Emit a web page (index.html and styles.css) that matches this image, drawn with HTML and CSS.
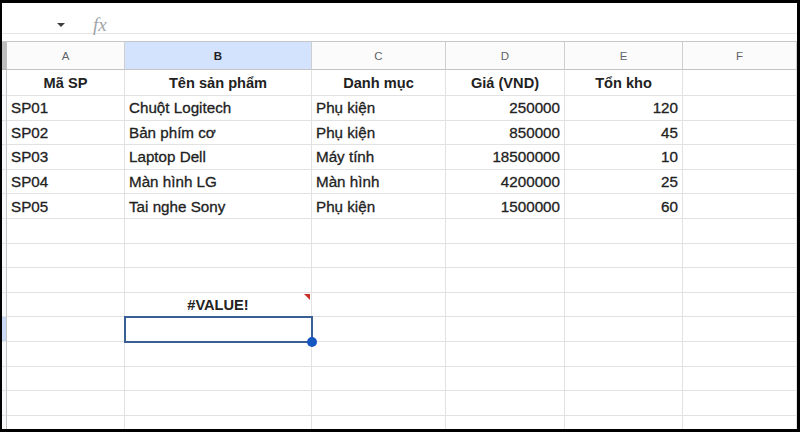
FILE: index.html
```html
<!DOCTYPE html>
<html>
<head>
<meta charset="utf-8">
<link rel="stylesheet" href="styles.css">
</head>
<body>
<div class="frame">
  <div class="toolbar">
    <div class="fbar">
      <span class="caret"></span>
      <span class="fx">fx</span>
    </div>
  </div>
  <div class="grid">
    <div class="corner"></div>
    <div class="ch">A</div>
    <div class="ch sel">B</div>
    <div class="ch">C</div>
    <div class="ch">D</div>
    <div class="ch">E</div>
    <div class="ch">F</div>

    <div class="rh"></div>
    <div class="c b ctr">Mã SP</div>
    <div class="c b ctr">Tên sản phẩm</div>
    <div class="c b ctr">Danh mục</div>
    <div class="c b ctr">Giá (VND)</div>
    <div class="c b ctr">Tổn kho</div>
    <div class="c"></div>

    <div class="rh"></div>
    <div class="c">SP01</div>
    <div class="c">Chuột Logitech</div>
    <div class="c">Phụ kiện</div>
    <div class="c num">250000</div>
    <div class="c num">120</div>
    <div class="c"></div>

    <div class="rh"></div>
    <div class="c">SP02</div>
    <div class="c">Bản phím cơ</div>
    <div class="c">Phụ kiện</div>
    <div class="c num">850000</div>
    <div class="c num">45</div>
    <div class="c"></div>

    <div class="rh"></div>
    <div class="c">SP03</div>
    <div class="c">Laptop Dell</div>
    <div class="c">Máy tính</div>
    <div class="c num">18500000</div>
    <div class="c num">10</div>
    <div class="c"></div>

    <div class="rh"></div>
    <div class="c">SP04</div>
    <div class="c">Màn hình LG</div>
    <div class="c">Màn hình</div>
    <div class="c num">4200000</div>
    <div class="c num">25</div>
    <div class="c"></div>

    <div class="rh"></div>
    <div class="c">SP05</div>
    <div class="c">Tai nghe Sony</div>
    <div class="c">Phụ kiện</div>
    <div class="c num">1500000</div>
    <div class="c num">60</div>
    <div class="c"></div>

    <div class="rh"></div><div class="c"></div><div class="c"></div><div class="c"></div><div class="c"></div><div class="c"></div><div class="c"></div>
    <div class="rh"></div><div class="c"></div><div class="c"></div><div class="c"></div><div class="c"></div><div class="c"></div><div class="c"></div>
    <div class="rh"></div><div class="c"></div><div class="c"></div><div class="c"></div><div class="c"></div><div class="c"></div><div class="c"></div>

    <div class="rh"></div>
    <div class="c"></div>
    <div class="c b ctr">#VALUE!<span class="flag"></span></div>
    <div class="c"></div><div class="c"></div><div class="c"></div><div class="c"></div>

    <div class="rh rsel"></div>
    <div class="c"></div>
    <div class="c active"><span class="handle"></span></div>
    <div class="c"></div><div class="c"></div><div class="c"></div><div class="c"></div>

    <div class="rh"></div><div class="c"></div><div class="c"></div><div class="c"></div><div class="c"></div><div class="c"></div><div class="c"></div>
    <div class="rh"></div><div class="c"></div><div class="c"></div><div class="c"></div><div class="c"></div><div class="c"></div><div class="c"></div>
    <div class="rh"></div><div class="c"></div><div class="c"></div><div class="c"></div><div class="c"></div><div class="c"></div><div class="c"></div>
    <div class="rh"></div><div class="c"></div><div class="c"></div><div class="c"></div><div class="c"></div><div class="c"></div><div class="c"></div>
  </div>
</div>
</body>
</html>
```

FILE: styles.css
```css
html, body {
  margin: 0;
  padding: 0;
  background: #000;
}
.frame {
  margin: 3px 3px 0 2px;
  height: 426px;
  background: #fff;
  overflow: hidden;
  font-family: "Liberation Sans", Arial, sans-serif;
  color: #222;
}
.toolbar {
  height: 38px;
  box-sizing: border-box;
}
.fbar {
  height: 31px;
  border-bottom: 1px solid #e6e6e6;
  display: flex;
  align-items: center;
  padding-left: 55px;
  padding-top: 15px;
  box-sizing: border-box;
}
.caret {
  width: 0;
  height: 0;
  border-left: 4px solid transparent;
  border-right: 4px solid transparent;
  border-top: 4px solid #3c4043;
  margin-top: -1px;
}
.fx {
  margin-left: 28px;
  font-family: "Liberation Serif", serif;
  font-style: italic;
  font-size: 19px;
  color: #a0a4a8;
  margin-top: -2px;
}
.grid {
  display: grid;
  grid-template-columns: 5px 118px 187px 134px 119px 118px 114px;
  grid-template-rows: 28px 26px;
  grid-auto-rows: 24.6px;
  border-top: 1px solid #c7c7c7;
}
.corner {
  background: #bdbdbd;
  border-bottom: 1px solid #b0b0b0;
}
.ch {
  background: #fbfbfb;
  border-right: 1px solid #cfcfcf;
  border-bottom: 1px solid #c4c4c4;
  font-size: 11.5px;
  color: #5f6368;
  display: flex;
  align-items: center;
  justify-content: center;
}
.ch.sel {
  background: #d3e3fd;
  color: #1f1f1f;
  font-weight: bold;
}
.rh {
  background: #f8f9fa;
  border-right: 1px solid #c4c4c4;
  border-bottom: 1px solid #e2e2e2;
}
.rh.rsel {
  background: #c9d8f3;
}
.c {
  position: relative;
  border-right: 1px solid #e2e2e2;
  border-bottom: 1px solid #e2e2e2;
  font-size: 15.2px;
  -webkit-text-stroke: 0.3px #222;
  padding: 0 4px;
  display: flex;
  align-items: center;
  white-space: nowrap;
  min-width: 0;
}
.b {
  font-weight: bold;
  font-size: 14.6px;
  -webkit-text-stroke: 0;
}
.ctr { justify-content: center; }
.num { justify-content: flex-end; }
.flag {
  position: absolute;
  top: 1px;
  right: 1px;
  width: 0;
  height: 0;
  border-top: 6px solid #c8302a;
  border-left: 6px solid transparent;
}
.active {
  outline: 2px solid #3a5f94;
  outline-offset: -1px;
  z-index: 2;
}
.handle {
  position: absolute;
  right: -6px;
  bottom: -6px;
  width: 10px;
  height: 10px;
  border-radius: 50%;
  background: #1757c2;
  z-index: 3;
}
```
